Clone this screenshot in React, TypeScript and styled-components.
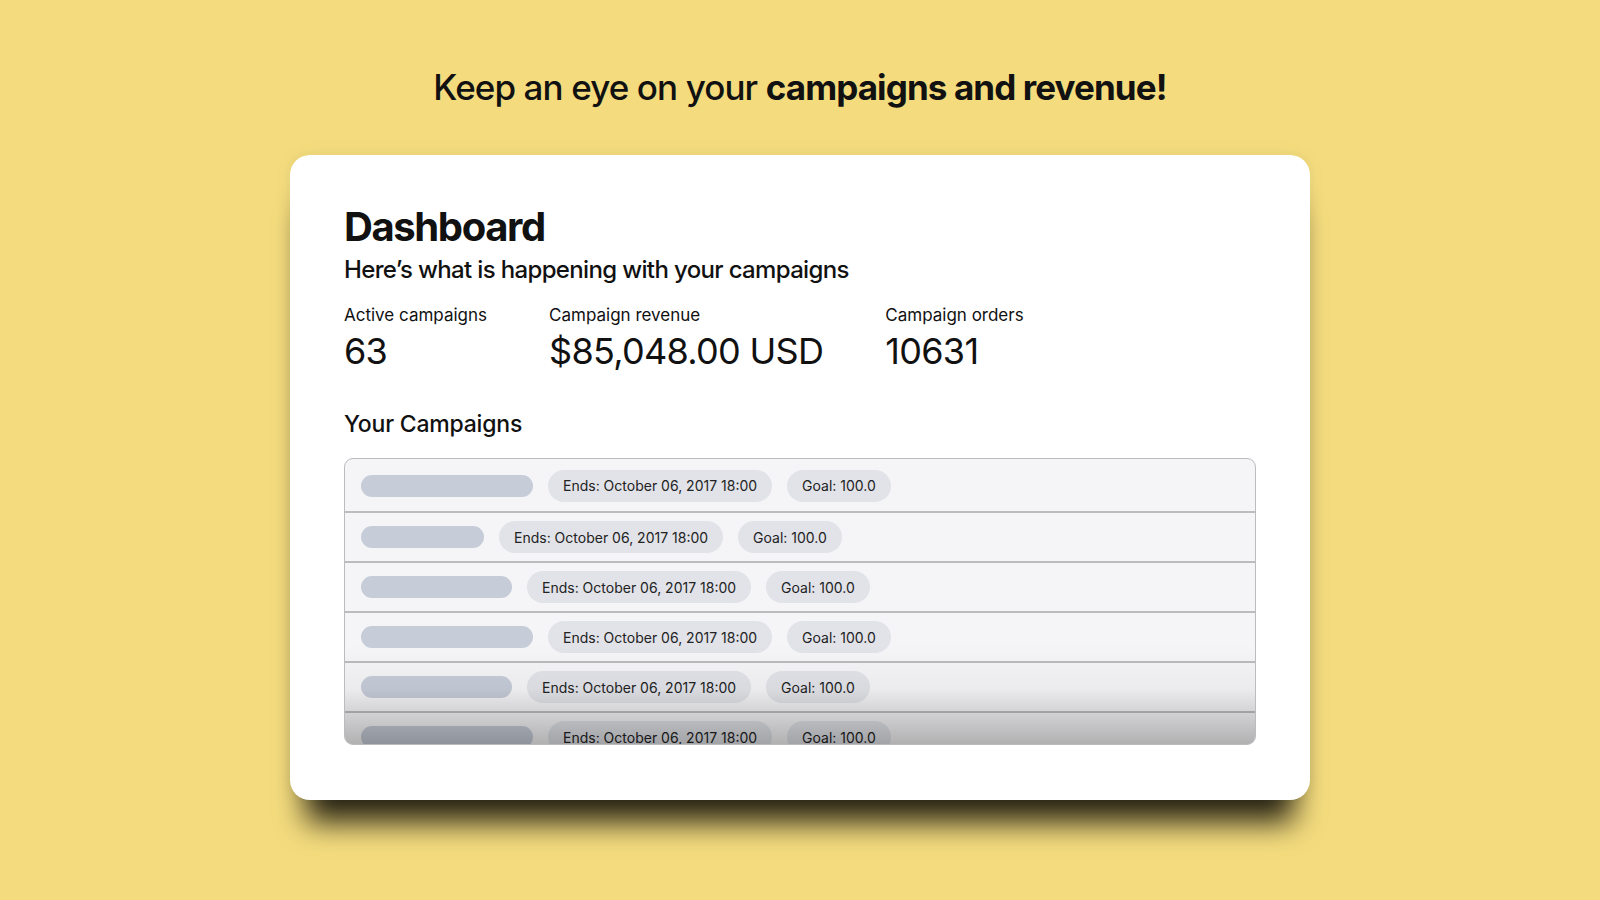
import React from 'react'
import styled, {createGlobalStyle} from 'styled-components'

const GlobalStyle = createGlobalStyle`
  html, body {
    margin: 0;
    padding: 0;
    background: #F4DC7E;
  }
  body {
    font-family: Inter, "Noto Sans", sans-serif;
    color: #111;
  }
`

const Page = styled.div`
  width: 1600px;
  height: 900px;
  display: flex;
  flex-direction: column;
  align-items: center;
  box-sizing: border-box;
  padding-top: 65px;
  overflow: hidden;
`

const Headline = styled.h1`
  margin: 0;
  font-size: 35px;
  line-height: 44px;
  font-weight: 500;
  letter-spacing: -0.9px;

  b {
    font-weight: 700;
  }
`

const Card = styled.div`
  margin-top: 46px;
  width: 1020px;
  height: 645px;
  box-sizing: border-box;
  padding: 48px 54px 0;
  background: #fff;
  border-radius: 20px;
  box-shadow: 0 38px 30px -16px rgba(0, 0, 0, 0.85), 0 0 16px rgba(0, 0, 0, 0.08);
  display: flex;
  flex-direction: column;
`

const Title = styled.h2`
  margin: 0;
  font-size: 40px;
  line-height: 48px;
  font-weight: 700;
  letter-spacing: -1.4px;
`

const Subtitle = styled.p`
  margin: 3px 0 0;
  font-size: 24px;
  line-height: 32px;
  font-weight: 500;
  letter-spacing: -0.65px;
`

const Stats = styled.div`
  display: flex;
  gap: 62px;
  margin-top: 18px;
`

const Stat = styled.div`
  display: flex;
  flex-direction: column;
  gap: 4px;
`

const StatLabel = styled.span`
  font-size: 17px;
  line-height: 22px;
  font-weight: 400;
`

const StatValue = styled.span`
  font-size: 36px;
  line-height: 42px;
  font-weight: 400;
  letter-spacing: -0.7px;
`

const SectionTitle = styled.h3`
  margin: 37px 0 0;
  font-size: 23px;
  line-height: 30px;
  font-weight: 500;
  letter-spacing: -0.2px;
`

const Table = styled.div`
  position: relative;
  margin-top: 19px;
  height: 287px;
  box-sizing: border-box;
  border: 1.5px solid #bcbcbf;
  border-radius: 9px;
  background: #f5f5f7;
  overflow: hidden;

  &::after {
    content: '';
    position: absolute;
    left: 0;
    right: 0;
    bottom: 0;
    height: 100px;
    background: linear-gradient(180deg, rgba(0, 0, 0, 0) 0%, rgba(0, 0, 0, 0.04) 45%, rgba(0, 0, 0, 0.28) 100%);
    pointer-events: none;
  }
`

const Row = styled.div<{first?: boolean}>`
  height: ${props => props.first ? 51 : 48}px;
  padding-top: ${props => props.first ? 1 : 0}px;
  border-bottom: 2px solid #bcbcbf;
  display: flex;
  align-items: center;
  gap: 15px;
  padding-left: 16px;
`

const NameBar = styled.div<{w: number}>`
  width: ${props => props.w}px;
  height: 22px;
  border-radius: 11px;
  background: #c6ccd8;
`

const Pill = styled.span`
  height: 32px;
  display: flex;
  align-items: center;
  padding: 0 15px;
  border-radius: 16px;
  background: #e1e3e8;
  font-size: 14px;
  color: #222;
`

const rows = [172, 123, 151, 172, 151, 172]

const App: React.FC = () => {
    return (
        <Page>
            <GlobalStyle/>
            <Headline>Keep an eye on your <b>campaigns and revenue!</b></Headline>
            <Card>
                <Title>Dashboard</Title>
                <Subtitle>Here’s what is happening with your campaigns</Subtitle>
                <Stats>
                    <Stat>
                        <StatLabel>Active campaigns</StatLabel>
                        <StatValue>63</StatValue>
                    </Stat>
                    <Stat>
                        <StatLabel>Campaign revenue</StatLabel>
                        <StatValue>$85,048.00 USD</StatValue>
                    </Stat>
                    <Stat>
                        <StatLabel>Campaign orders</StatLabel>
                        <StatValue>10631</StatValue>
                    </Stat>
                </Stats>
                <SectionTitle>Your Campaigns</SectionTitle>
                <Table>
                    {rows.map((w, i) => (
                        <Row key={i} first={i === 0}>
                            <NameBar w={w}/>
                            <Pill>Ends: October 06, 2017 18:00</Pill>
                            <Pill>Goal: 100.0</Pill>
                        </Row>
                    ))}
                </Table>
            </Card>
        </Page>
    )
}

export default App
